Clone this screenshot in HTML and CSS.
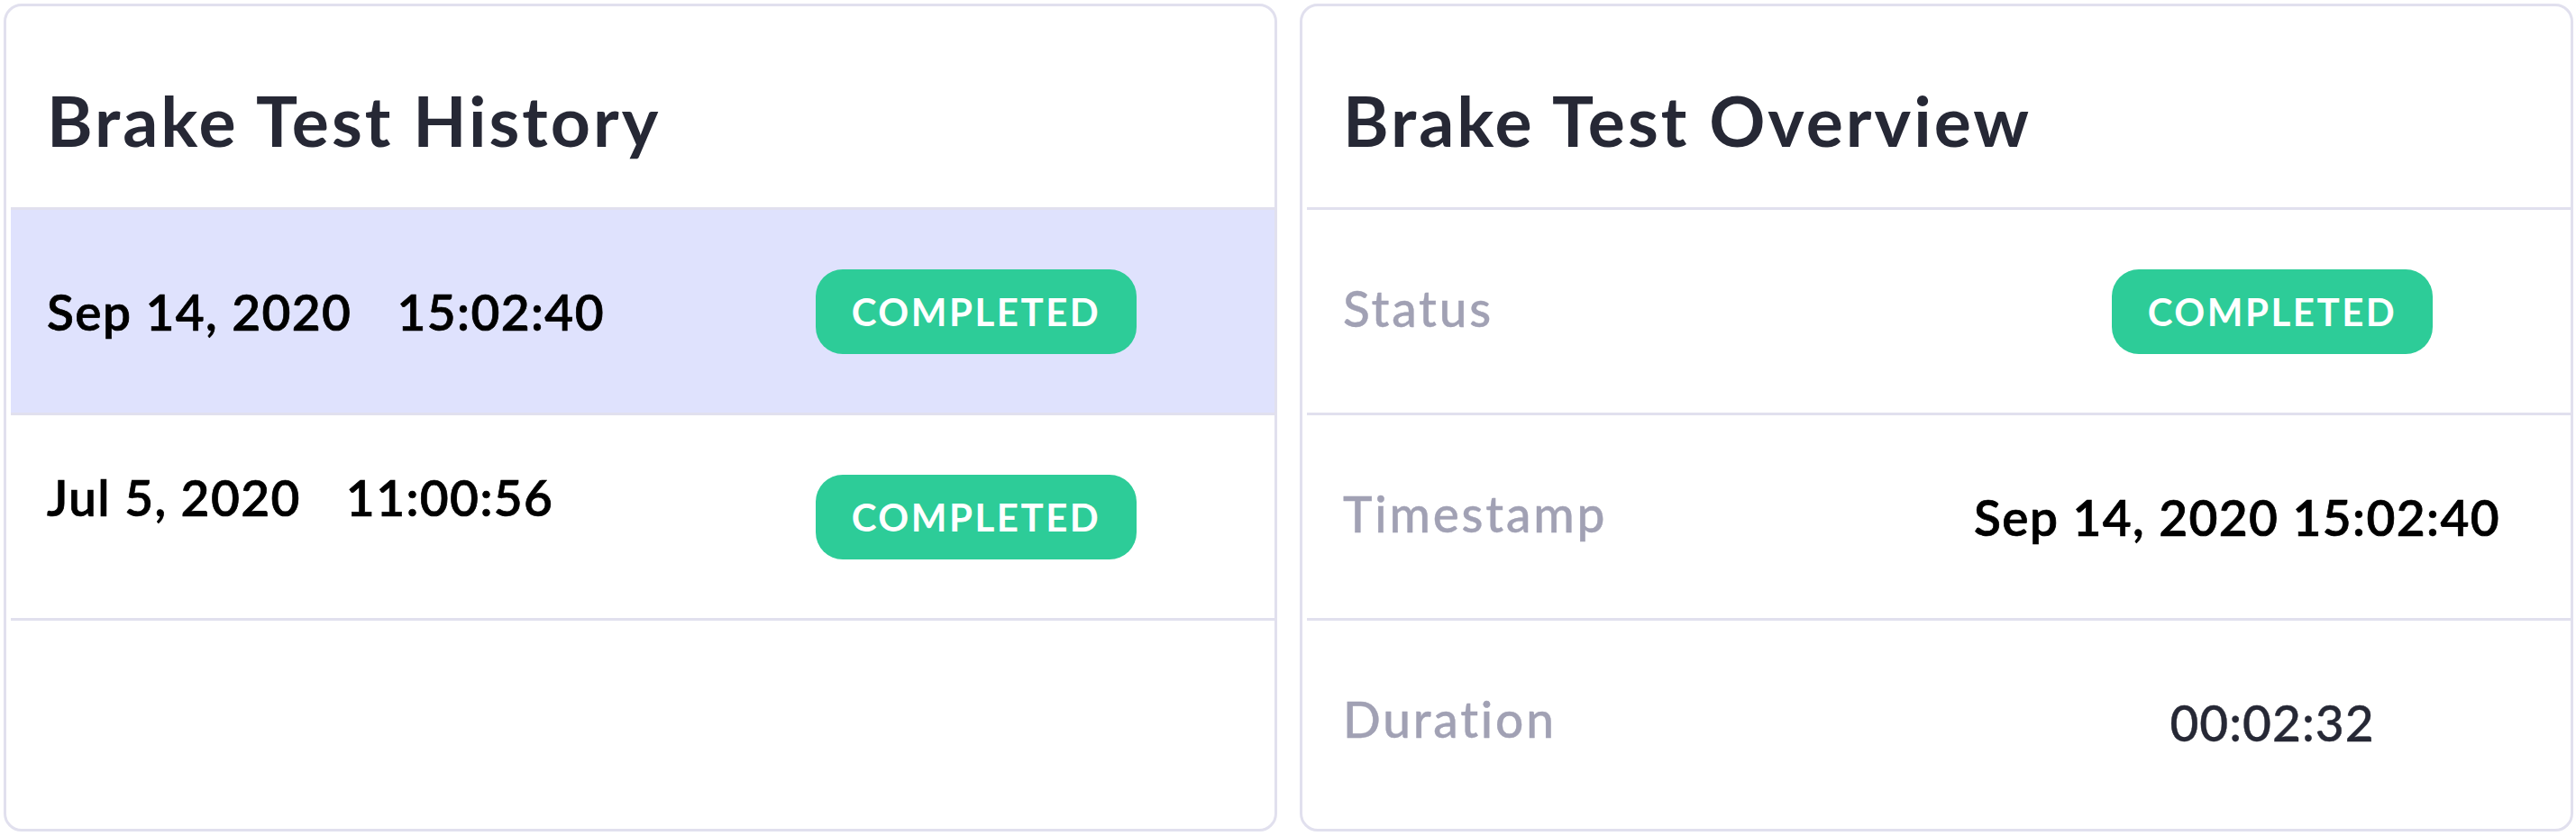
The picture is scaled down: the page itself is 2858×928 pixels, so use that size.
FILE: index.html
```html
<!DOCTYPE html>
<html lang="en">
<head>
<meta charset="utf-8">
<title>Brake Test</title>
<link rel="stylesheet" href="styles.css">
</head>
<body>
<main class="panels">
  <section class="card">
    <header class="card-header"><h2 class="card-title">Brake Test History</h2></header>
    <div class="row row--selected">
      <div class="row-text"><span>Sep 14, 2020</span><span>15:02:40</span></div>
      <div class="row-value"><span class="badge">COMPLETED</span></div>
    </div>
    <div class="row">
      <div class="row-text row-text--raised"><span>Jul 5, 2020</span><span>11:00:56</span></div>
      <div class="row-value"><span class="badge">COMPLETED</span></div>
    </div>
    <div class="row row--empty"></div>
  </section>
  <section class="card">
    <header class="card-header"><h2 class="card-title">Brake Test Overview</h2></header>
    <div class="row">
      <div class="label">Status</div>
      <div class="row-value"><span class="badge">COMPLETED</span></div>
    </div>
    <div class="row">
      <div class="label">Timestamp</div>
      <div class="row-value row-value--start"><span class="value value--dark">Sep 14, 2020 15:02:40</span></div>
    </div>
    <div class="row">
      <div class="label">Duration</div>
      <div class="row-value"><span class="value">00:02:32</span></div>
    </div>
  </section>
</main>
</body>
</html>
```
FILE: styles.css
```css
* { box-sizing: border-box; }
html, body { margin: 0; background: #ffffff; }
body {
  padding: 4px 3px 5px 4px;
  font-family: Lato, "Noto Sans", sans-serif;
}
.panels {
  display: flex;
  gap: 25px;
  height: 919px;
}
.card {
  flex: 1 1 0;
  min-width: 0;
  border: 3px solid #e1e0ee;
  border-radius: 20px;
  padding-left: 5px;
  display: flex;
  flex-direction: column;
  overflow: hidden;
  background: #fff;
}
.card-header {
  height: 223px;
  flex: none;
  display: flex;
  align-items: center;
  padding: 28px 0 0 40px;
}
.card-title {
  margin: 0;
  font-size: 77px;
  font-weight: 700;
  color: #262835;
  letter-spacing: 3px;
}
.row {
  flex: none;
  height: 228px;
  border-top: 3px solid #e1e0ee;
  display: grid;
  grid-template-columns: 1fr 662px;
  align-items: center;
  padding-left: 40px;
}
.row--selected { background: #dfe2fd; }
.row--empty { flex: 1 1 auto; height: auto; }
.row-text {
  display: flex;
  gap: 50px;
  font-size: 55px;
  font-weight: 600;
  color: #000;
  letter-spacing: 1.4px;
  -webkit-text-stroke: 0.7px #000;
}
.row-text--raised { margin-bottom: 44px; }
.row-value {
  display: flex;
  justify-content: center;
}
.row-value--start { justify-content: flex-start; }
.label {
  font-size: 55px;
  font-weight: 500;
  color: #a1a1b4;
  letter-spacing: 2.8px;
  margin-bottom: 8px;
  -webkit-text-stroke: 0.4px #a1a1b4;
}
.value {
  font-size: 55px;
  font-weight: 500;
  color: #262835;
  letter-spacing: 1px;
  -webkit-text-stroke: 0.4px #262835;
}
.value--dark { color: #000; font-weight: 600; letter-spacing: 1.4px; -webkit-text-stroke: 0.7px #000; }
.badge {
  display: flex;
  align-items: center;
  justify-content: center;
  width: 356px;
  height: 94px;
  border-radius: 30px;
  background: #2dcc98;
  color: #fff;
  font-size: 42px;
  font-weight: 700;
  letter-spacing: 2.5px;
}
```
